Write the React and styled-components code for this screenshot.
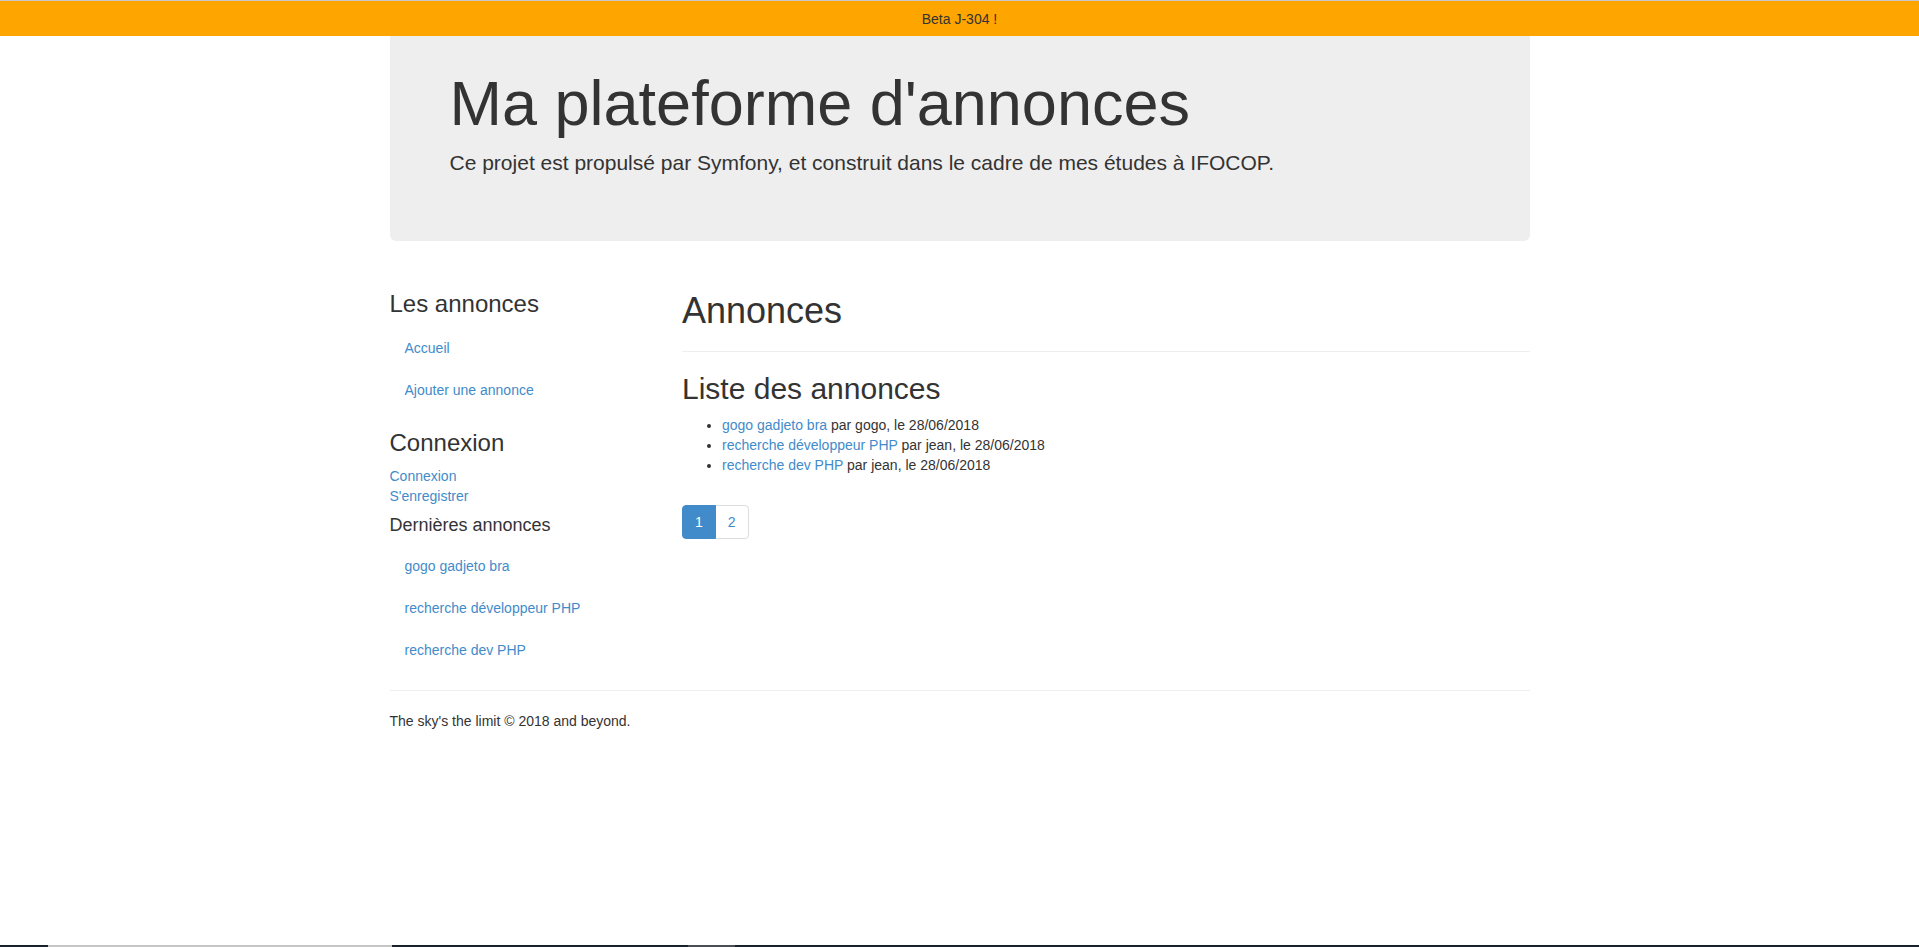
import styled, { createGlobalStyle } from "styled-components";

const GlobalStyle = createGlobalStyle`
  * {
    box-sizing: border-box;
  }

  body {
    margin: 0;
    border-top: 1px solid #c8c8c8;
    font-family: "Liberation Sans", Arial, Helvetica, sans-serif;
    font-size: 14px;
    line-height: 1.42857143;
    color: #333;
    background-color: #fff;
  }

  a {
    color: #428bca;
    text-decoration: none;
  }
`;

const BetaBanner = styled.div`
  position: fixed;
  top: 1px;
  left: 0;
  right: 0;
  height: 35px;
  background-color: #ffa500;
  color: #333;
  display: flex;
  align-items: center;
  justify-content: center;
  z-index: 10;
`;

const Container = styled.div`
  width: 1170px;
  margin: 0 auto;
  padding: 0 15px;
`;

const Jumbotron = styled.div`
  background-color: #eee;
  border-radius: 6px;
  padding: 48px 60px;
  margin-bottom: 30px;

  h1 {
    font-size: 63px;
    font-weight: 500;
    line-height: 1.1;
    margin: 20px 0 10px;
  }

  p {
    font-size: 21px;
    margin: 0 0 15px;
  }
`;

const Row = styled.div`
  display: flex;
  margin: 0 -15px;
`;

const Sidebar = styled.aside`
  flex: 0 0 25%;
  padding: 0 15px;
`;

const Main = styled.main`
  flex: 0 0 75%;
  padding: 0 15px;
`;

const Heading = styled.h3`
  font-size: ${(p) => p.$size}px;
  font-weight: 500;
  line-height: 1.1;
  margin: ${(p) => p.$top}px 0 10px;
`;

const Pills = styled.ul`
  list-style: none;
  padding-left: 0;
  margin: 0;

  li + li {
    margin-top: 2px;
  }

  a {
    display: block;
    padding: 10px 15px;
    border-radius: 4px;
  }
`;

const PlainLinks = styled.div`
  a {
    display: block;
  }
`;

const Rule = styled.hr`
  border: 0;
  border-top: 1px solid #eee;
  margin: 20px 0;
`;

const AdList = styled.ul`
  margin: 0 0 10px;
  padding-left: 40px;
`;

const Navigation = styled.div`
  margin-top: 30px;
`;

const Pagination = styled.ul`
  display: flex;
  list-style: none;
  padding-left: 0;
  margin: 20px 0;

  li + li {
    margin-left: -1px;
  }
`;

const PageLink = styled.a`
  display: block;
  padding: 6px 12px;
  border: 1px solid ${(p) => (p.$active ? "#428bca" : "#ddd")};
  background-color: ${(p) => (p.$active ? "#428bca" : "#fff")};
  color: ${(p) => (p.$active ? "#fff" : "#428bca")};
  border-radius: ${(p) => (p.$first ? "4px 0 0 4px" : p.$last ? "0 4px 4px 0" : "0")};
  position: relative;
  z-index: ${(p) => (p.$active ? 2 : 1)};
`;

const Footer = styled.footer`
  p {
    margin: 0 0 10px;
  }
`;

const BottomStrip = styled.div`
  position: fixed;
  left: 0;
  right: 0;
  bottom: 0;
  height: 2px;
  display: flex;
  background-color: #17212b;
`;

const StripPart = styled.span`
  width: ${(p) => p.$w}px;
  background-color: ${(p) => p.$color};
`;

const sideAds = ["gogo gadjeto bra", "recherche développeur PHP", "recherche dev PHP"];

const ads = [
  { title: "gogo gadjeto bra", author: "gogo", date: "28/06/2018" },
  { title: "recherche développeur PHP", author: "jean", date: "28/06/2018" },
  { title: "recherche dev PHP", author: "jean", date: "28/06/2018" },
];

export default function App() {
  return (
    <>
      <GlobalStyle />
      <BetaBanner>Beta J-304 !</BetaBanner>
      <Container>
        <Jumbotron>
          <h1>Ma plateforme d'annonces</h1>
          <p>Ce projet est propulsé par Symfony, et construit dans le cadre de mes études à IFOCOP.</p>
        </Jumbotron>

        <Row>
          <Sidebar>
            <Heading $size={24} $top={20}>Les annonces</Heading>
            <Pills>
              <li><a href="#">Accueil</a></li>
              <li><a href="#">Ajouter une annonce</a></li>
            </Pills>

            <Heading $size={24} $top={20}>Connexion</Heading>
            <PlainLinks>
              <a href="#">Connexion</a>
              <a href="#">S'enregistrer</a>
            </PlainLinks>

            <Heading as="h4" $size={18} $top={10}>Dernières annonces</Heading>
            <Pills>
              {sideAds.map((t) => (
                <li key={t}><a href="#">{t}</a></li>
              ))}
            </Pills>
          </Sidebar>

          <Main>
            <Heading as="h1" $size={36} $top={20}>Annonces</Heading>
            <Rule />
            <Heading as="h2" $size={30} $top={20}>Liste des annonces</Heading>
            <AdList>
              {ads.map((ad) => (
                <li key={ad.title}>
                  <a href="#">{ad.title}</a> par {ad.author}, le {ad.date}
                </li>
              ))}
            </AdList>
            <Navigation>
              <Pagination>
                <li><PageLink href="#" $active $first>1</PageLink></li>
                <li><PageLink href="#" $last>2</PageLink></li>
              </Pagination>
            </Navigation>
          </Main>
        </Row>

        <Footer>
          <Rule />
          <p>The sky's the limit © 2018 and beyond.</p>
        </Footer>
      </Container>

      <BottomStrip>
        <StripPart $w={48} $color="#17212b" />
        <StripPart $w={344} $color="#c6c6c6" />
        <StripPart $w={296} $color="#17212b" />
        <StripPart $w={47} $color="#4a4f55" />
      </BottomStrip>
    </>
  );
}
